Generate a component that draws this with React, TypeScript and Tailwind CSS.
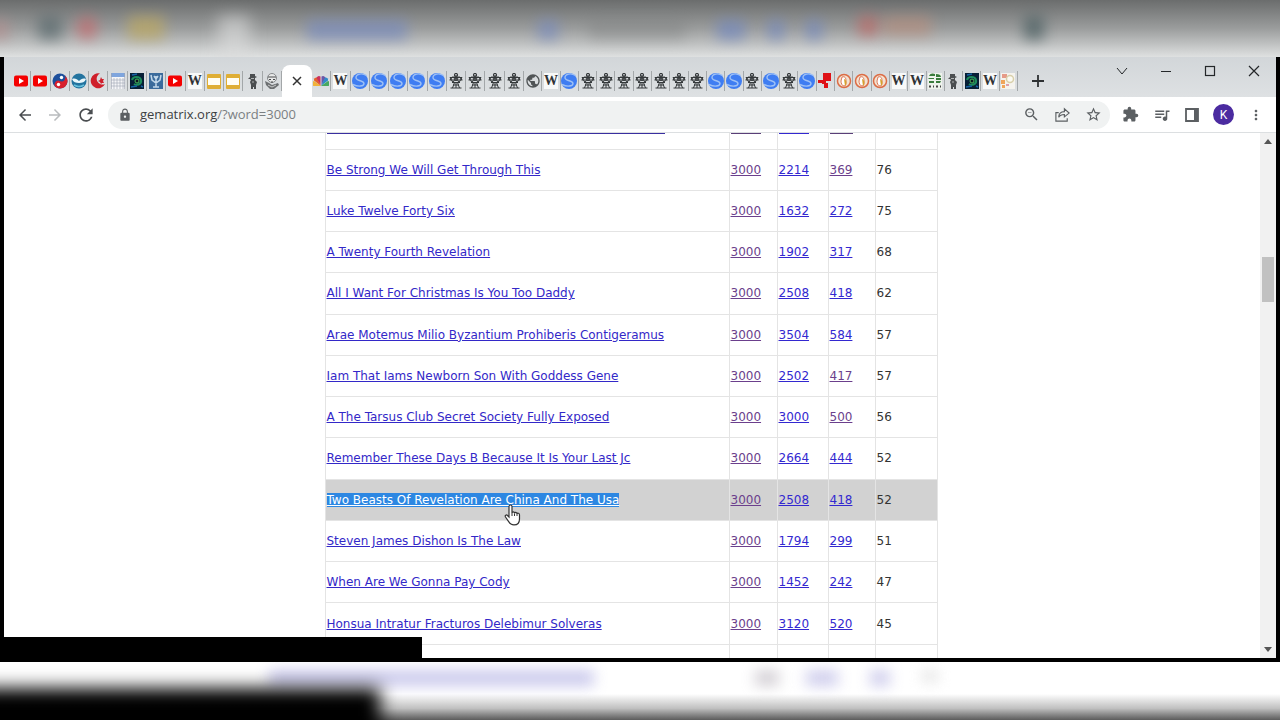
import type { ReactNode } from 'react';
import {
  MdArrowBack,
  MdArrowForward,
  MdRefresh,
  MdLock,
  MdZoomOut,
  MdStarBorder,
  MdExtension,
  MdQueueMusic,
  MdMoreVert,
  MdPublic,
} from 'react-icons/md';

type IconName =
  | 'youtube' | 'yin' | 'bird' | 'moon' | 'calendar' | 'swirl' | 'psi' | 'wiki' | 'slides'
  | 'figure' | 'mask' | 'peacock' | 's' | 'tower' | 'globe' | 'red' | 'duck' | 'leaf' | 'palette';

interface Row {
  phrase: string;
  jewish: string;
  english: string;
  simple: string;
  searches: string;
  visited?: boolean;
  selected?: boolean;
}

const firstTabs: IconName[] = [
  'youtube', 'youtube', 'yin', 'bird', 'moon', 'calendar', 'swirl', 'psi', 'youtube', 'wiki',
  'slides', 'slides', 'figure', 'mask',
];

const middleTabs: IconName[] = [
  'peacock', 'wiki', 's', 's', 's', 's', 's', 'tower', 'tower', 'tower', 'tower',
];

const lastTabs: IconName[] = [
  'globe', 'wiki', 's', 'tower', 'tower', 'tower', 'tower', 'tower', 'tower', 'tower', 's', 's',
  'tower', 's', 'tower', 's', 'red', 'duck', 'duck', 'duck', 'wiki', 'wiki', 'leaf', 'figure',
  'swirl', 'wiki', 'palette',
];

const rows: Row[] = [
  { phrase: 'Be Strong We Will Get Through This', jewish: '3000', english: '2214', simple: '369', searches: '76', visited: true },
  { phrase: 'Luke Twelve Forty Six', jewish: '3000', english: '1632', simple: '272', searches: '75' },
  { phrase: 'A Twenty Fourth Revelation', jewish: '3000', english: '1902', simple: '317', searches: '68' },
  { phrase: 'All I Want For Christmas Is You Too Daddy', jewish: '3000', english: '2508', simple: '418', searches: '62' },
  { phrase: 'Arae Motemus Milio Byzantium Prohiberis Contigeramus', jewish: '3000', english: '3504', simple: '584', searches: '57' },
  { phrase: 'Iam That Iams Newborn Son With Goddess Gene', jewish: '3000', english: '2502', simple: '417', searches: '57', visited: true },
  { phrase: 'A The Tarsus Club Secret Society Fully Exposed', jewish: '3000', english: '3000', simple: '500', searches: '56', visited: true },
  { phrase: 'Remember These Days B Because It Is Your Last Jc', jewish: '3000', english: '2664', simple: '444', searches: '52' },
  { phrase: 'Two Beasts Of Revelation Are China And The Usa', jewish: '3000', english: '2508', simple: '418', searches: '52', selected: true },
  { phrase: 'Steven James Dishon Is The Law', jewish: '3000', english: '1794', simple: '299', searches: '51' },
  { phrase: 'When Are We Gonna Pay Cody', jewish: '3000', english: '1452', simple: '242', searches: '47' },
  { phrase: 'Honsua Intratur Fracturos Delebimur Solveras', jewish: '3000', english: '3120', simple: '520', searches: '45' },
];

const drawings: Partial<Record<IconName, ReactNode>> = {
  youtube: (
    <>
      <rect x="1" y="2.500" width="14" height="11" rx="2" fill="#f40000" />
      <path d="M6 5l5 3-5 3z" fill="#fff" />
    </>
  ),
  yin: (
    <>
      <circle cx="8" cy="8" r="7.500" fill="#1d4f9c" />
      <path d="M8 .5a7.500 7.500 0 0 1 0 15 3.750 3.750 0 0 1 0-7.500 3.750 3.750 0 0 0 0-7.500z" fill="#d8202c" transform="rotate(25 8 8)" />
      <circle cx="9.500" cy="4.500" r="1.700" fill="#fff" />
      <circle cx="6.500" cy="11.500" r="1.700" fill="#fff" />
    </>
  ),
  bird: (
    <>
      <circle cx="8" cy="8" r="7.500" fill="#23739f" />
      <path d="M1 6c3-1 5 0 7 2 2-2 4-3 7-2-1 3-4 4-7 4S2 9 1 6z" fill="#e8f6fb" />
      <path d="M3 12q5 3 10 0" stroke="#67c0dc" strokeWidth="1.5" fill="none" />
    </>
  ),
  moon: (
    <>
      <path d="M10 .5A7.500 7.500 0 1 0 15 11 5.500 5.500 0 1 1 10 .5z" fill="#cf1f2b" />
      <path d="M11 4l1 2 2 0-1 2 1 2-2 0-1 1-1-2-2-1 2-1z" fill="#cf1f2b" />
    </>
  ),
  calendar: (
    <>
      <rect x="1" width="14" height="16" fill="#f5f6f8" />
      <rect x="1" width="14" height="4" fill="#7fa5dd" />
      <path d="M1 7h14M1 10h14M1 13h14M4 5v11M7 5v11M10 5v11M13 5v11M1.500 0v16M14.500 0v16" stroke="#9fa5b1" strokeWidth=".6" />
    </>
  ),
  swirl: (
    <>
      <rect x="1" width="14" height="16" fill="#071f36" />
      <path d="M3 7c1-4 8-4 9 0s-4 6-7 4" stroke="#1c8b5b" strokeWidth="2" fill="none" />
      <circle cx="8" cy="8" r="2" fill="#0a1420" stroke="#4dbb5b" />
      <path d="M2 14l6-1M3 2l5-1M12 13l2 1" stroke="#1764a6" strokeWidth="1.5" />
    </>
  ),
  psi: (
    <>
      <rect x="1" width="14" height="16" fill="#3b6b9c" />
      <path d="M3 2l1 5 4 3 4-3 1-5M8 3v11M5 14h6M6 3l2 3 2-3" stroke="#c2d8ea" strokeWidth="1.5" fill="none" />
    </>
  ),
  slides: (
    <>
      <rect x="1" y="1" width="14" height="15" rx="1" fill="#dfae35" />
      <rect x="2" y="5" width="12" height="7" fill="#fffdf3" />
    </>
  ),
  figure: (
    <>
      <path d="M5 1h5v2l2 1-2 1v2l2 2-1 3v4H9v-2H8v2H6v-4L5 9l1-2-1-1H3l2-2z" fill="#4c4f51" />
      <path d="M6 5.500h3M7 9h2" stroke="#b2b5b5" />
    </>
  ),
  mask: (
    <>
      <path d="M1 8l4 2 3 2 6-2 1 2-5 4H6l-4-4z" fill="#6c6f71" />
      <circle cx="8" cy="5" r="4.500" fill="#e8e9e9" stroke="#86898b" />
      <path d="M4 4h8M5 6.500h2M9 6.500h2M7 9h2" stroke="#47494b" strokeWidth="1.2" />
      <path d="M4 12l4 2 4-2" stroke="#c9caca" fill="none" />
    </>
  ),
  peacock: (
    <>
      <path d="M8 13L2 13a2.500 2.500 0 0 1-1-5z" fill="#f1b23a" />
      <path d="M8 13L1 7.500a2.500 2.500 0 0 1 3-3z" fill="#e5622d" />
      <path d="M7.500 12L3.500 5a2.500 2.500 0 0 1 4-1.500z" fill="#cb315f" />
      <path d="M8.500 12V3.500a2.500 2.500 0 0 1 4 1.500z" fill="#6b56a7" />
      <path d="M8 13l4-8.500a2.500 2.500 0 0 1 3 3z" fill="#3189c9" />
      <path d="M8 13l7-5a2.500 2.500 0 0 1-1 5z" fill="#48a860" />
    </>
  ),
  s: (
    <>
      <circle cx="8" cy="8" r="8" fill="#3f7df2" />
      <path d="M14.500 2.500C10-.5 4 1 4 4.500c0 4 8 2.500 8 6 0 3-6 3.500-11 1" stroke="#9fc1f5" strokeWidth="1.4" fill="none" />
    </>
  ),
  tower: (
    <>
      <path d="M6 3h4M2 4.500h12M1.500 7h13M4 9.500h8M5 12h6M2.500 15h11M2 4.500L5 9.500 8 4.500l3 5 3-5M2 7l3-3.500L8 8l3-4.500L14 7M6.500 9.500l-2 5.500M9.500 9.500l2 5.500M8 9.500V15" stroke="#34383a" strokeWidth="1" fill="none" />
      <circle cx="8" cy="2" r="1.500" fill="none" stroke="#34383a" strokeWidth="1.2" />
    </>
  ),
  red: <path d="M6 0h8v8H9v2h2v5H7v-4H5v-1H1V7h5z" fill="#df1116" />,
  duck: (
    <>
      <circle cx="8" cy="8" r="6.500" fill="#f3e3d2" stroke="#dc6c45" strokeWidth="1.5" />
      <path d="M6 4c3-1 4 1 4 4s0 5-2 5-3-3-3-5z" fill="#fff" stroke="#d65a36" strokeWidth=".8" />
      <path d="M8 6c3 1 3 5 1 7z" fill="#d6a12c" />
    </>
  ),
  leaf: (
    <>
      <rect x="1" width="14" height="16" fill="#eef3ec" />
      <path d="M2 3c1-3 4-3 6-2v2zM9 1c3 0 5 1 5 3l-5 0zM1 5h6v1H2zM9 5h5v2H9zM2 8h5v2H2zM9 8h5l-1 2H9z" fill="#397c3c" />
      <path d="M2 13.500h2M6 13.500h1M9 13.500h2M13 13.500h1" stroke="#444" strokeWidth="2" />
    </>
  ),
  palette: (
    <>
      <rect x="1" width="14" height="16" fill="#f5f3ee" />
      <path d="M2 1h5v4H2z" fill="#e69b88" />
      <circle cx="10" cy="6" r="3.500" fill="#fbfaf2" stroke="#d8cfaa" strokeWidth="1.500" />
      <path d="M1 7h4v4H1zM2 12h3v3H2z" fill="#f0a55b" />
      <path d="M6 11h3v2H6z" fill="#dca0ac" />
    </>
  ),
};

const Favicon = ({ name }: { name: IconName }) => {
  if (name === 'wiki') {
    return (
      <span className="flex h-4 w-3.5 items-center justify-center bg-[#f8f9f9] font-['Liberation_Serif',serif] text-sm leading-4 font-bold text-[#303336]">
        W
      </span>
    );
  }
  if (name === 'globe') {
    return <MdPublic className="size-4 text-[#505456]" />;
  }
  return (
    <svg viewBox="0 0 16 16" className="size-4" aria-hidden="true">
      {drawings[name]}
    </svg>
  );
};

const TabGroup = ({ tabs, className }: { tabs: IconName[]; className: string }) => (
  <div className={className}>
    {tabs.map((name, i) => (
      <button key={i} aria-label={`${name} tab`} className="flex h-5 min-w-0 flex-1 items-center justify-center border-r border-[#a3a7a9]">
        <Favicon name={name} />
      </button>
    ))}
  </div>
);

const TabStrip = () => (
  <div className="flex h-10 items-end bg-linear-to-b from-[#d2d6d9] to-[#dee1e3] pl-2">
    <TabGroup tabs={firstTabs} className="flex h-8 w-[270px] items-center" />
    <div className="flex h-8 w-[30px] items-center justify-center rounded-t-lg bg-white">
      <button aria-label="Close tab">
        <svg viewBox="0 0 10 10" className="size-2.5" stroke="#333" strokeWidth="1.5">
          <path d="M1 1l8 8M9 1l-8 8" />
        </svg>
      </button>
    </div>
    <TabGroup tabs={middleTabs} className="flex h-8 w-[212px] items-center" />
    <TabGroup tabs={lastTabs} className="flex h-8 w-[494px] items-center" />
    <button aria-label="New tab" className="ml-3.5 flex h-8 items-center">
      <svg viewBox="0 0 12 12" className="size-3" stroke="#2e3133" strokeWidth="1.8">
        <path d="M6 0v12M0 6h12" />
      </svg>
    </button>
    <div className="mr-4 ml-auto flex items-center gap-8 self-start pt-2 text-[#242729]">
      <button aria-label="Search tabs">
        <svg viewBox="0 0 12 12" className="size-3" fill="none" stroke="currentColor">
          <path d="M1 3l5 6 5-6" />
        </svg>
      </button>
      <button aria-label="Minimize">
        <svg viewBox="0 0 12 12" className="size-3" stroke="currentColor">
          <path d="M1 6.500h10" />
        </svg>
      </button>
      <button aria-label="Maximize">
        <svg viewBox="0 0 12 12" className="size-3" fill="none" stroke="currentColor" strokeWidth="1.2">
          <rect x="1.500" y="1.500" width="9" height="9" />
        </svg>
      </button>
      <button aria-label="Close">
        <svg viewBox="0 0 12 12" className="size-3" stroke="currentColor" strokeWidth="1.2">
          <path d="M1 1l10 10M11 1L1 11" />
        </svg>
      </button>
    </div>
  </div>
);

const Toolbar = () => (
  <div className="flex h-9 items-center border-b border-[#dcdfe1] bg-white pr-3 pl-3 text-[#5b5f62]">
    <div className="flex gap-3">
      <button aria-label="Back"><MdArrowBack className="size-[18px] text-[#4a4d50]" /></button>
      <button aria-label="Forward"><MdArrowForward className="size-[18px] text-[#b9bcbe]" /></button>
      <button aria-label="Reload"><MdRefresh className="size-[20px] text-[#4a4d50]" /></button>
    </div>
    <div className="ml-3 flex h-7 flex-1 items-center rounded-full bg-[#f0f2f2] pr-2 pl-2.5">
      <MdLock className="size-3.5 shrink-0" />
      <label className="relative ml-2 flex h-5 flex-1 items-center font-['Open_Sans',sans-serif] text-[13px]">
        <span className="pointer-events-none">
          <span className="text-[#3c4043]">gematrix.org</span>
          <span className="text-[#7b7f82]">/?word=3000</span>
        </span>
        <input aria-label="Address" className="absolute inset-0 w-full bg-transparent outline-none" />
      </label>
      <div className="flex items-center gap-3.5">
        <button aria-label="Zoom out"><MdZoomOut className="size-[17px]" /></button>
        <button aria-label="Share">
          <svg viewBox="0 0 18 18" className="size-[17px]" fill="none" stroke="currentColor" strokeWidth="1.2">
            <path d="M5 7H2v9h12v-3M5 12c0-4 2-6 6-6V3l5 4.500-5 4V9C8 9 6 10 5 12z" />
          </svg>
        </button>
        <button aria-label="Bookmark"><MdStarBorder className="size-[17px]" /></button>
      </div>
    </div>
    <div className="ml-3 flex items-center gap-3.5">
      <button aria-label="Extensions"><MdExtension className="size-[17px]" /></button>
      <button aria-label="Media"><MdQueueMusic className="size-[18px]" /></button>
      <button aria-label="Side panel">
        <svg viewBox="0 0 14 14" className="size-3.5">
          <path d="M1 1h12v12H1z" fill="none" stroke="currentColor" strokeWidth="1.8" />
          <path d="M9 1h4v12H9z" fill="currentColor" />
        </svg>
      </button>
      <button aria-label="Profile" className="flex size-[21px] items-center justify-center rounded-full bg-[#4b2ba0] font-['Roboto',sans-serif] text-xs text-white">
        K
      </button>
      <button aria-label="Menu"><MdMoreVert className="size-4" /></button>
    </div>
  </div>
);

const cell = 'border border-[#e4e4e4] pl-px whitespace-nowrap';

const ResultsTable = () => (
  <table className="h-[553px] w-[613px] shrink-0 table-fixed border-collapse text-[#333]">
    <colgroup>
      <col />
      <col className="w-12" />
      <col className="w-[51px]" />
      <col className="w-[47px]" />
      <col className="w-[62px]" />
    </colgroup>
    {/* bottom edge of the row scrolled under the toolbar */}
    <thead>
      <tr className="h-4 align-top">
        <td className="border-x border-[#e4e4e4] pl-px"><div className="h-px w-[338px] bg-[#3a2fa0]" /></td>
        <td className="border-x border-[#e4e4e4] pl-px"><div className="h-px w-[30px] bg-[#5a3f78]" /></td>
        <td className="border-x border-[#e4e4e4] pl-px"><div className="h-px w-[30px] bg-[#3328d0]" /></td>
        <td className="border-x border-[#e4e4e4] pl-px"><div className="h-px w-[23px] bg-[#5a3f78]" /></td>
        <td className="border-x border-[#e4e4e4]" />
      </tr>
    </thead>
    <tbody>
      {rows.map((row) => (
        <tr key={row.phrase} className={row.selected ? 'bg-[#d2d2d2]' : ''}>
          <td className={cell}>
            <a href="#" className={row.selected ? 'bg-[#2d87e2] text-white underline' : 'text-[#3328c8] underline'}>
              {row.phrase}
            </a>
          </td>
          <td className={cell}><a href="#" className="text-[#6b3f8c] underline">{row.jewish}</a></td>
          <td className={cell}><a href="#" className="text-[#3328d0] underline">{row.english}</a></td>
          <td className={cell}>
            <a href="#" className={row.visited ? 'text-[#6b3f8c] underline' : 'text-[#3328d0] underline'}>{row.simple}</a>
          </td>
          <td className={cell}>{row.searches}</td>
        </tr>
      ))}
      <tr>
        <td className={cell}>&nbsp;</td>
        <td className={cell} />
        <td className={cell} />
        <td className={cell} />
        <td className={cell} />
      </tr>
    </tbody>
  </table>
);

const HandCursor = () => (
  <svg viewBox="0 0 18 22" className="absolute top-[371px] left-1/2 -ml-[136px] h-[22px] w-[18px]" aria-hidden="true">
    <path
      d="M5 2.500c0-2 3-2 3 0V9c0-1.500 2.500-1.500 2.500.3.300-1.300 2.500-1.200 2.500.6.400-1.100 2.500-.9 2.500 1v4c0 4-2 6-5.500 6-3 0-4-1-5.500-3.500L1.500 13c-1-1.700 1-2.700 2-1.500L5 13z"
      fill="#fff"
      stroke="#333"
      strokeWidth="1.2"
    />
    <path d="M8 9v3M10.500 9.500V12M13 10v2" stroke="#333" />
  </svg>
);

const Scrollbar = () => (
  <div className="flex w-4 shrink-0 flex-col items-center justify-between bg-[#f1f1f1] py-1.5" aria-hidden="true">
    <svg viewBox="0 0 8 5" className="h-[5px] w-2"><path d="M0 5l4-5 4 5z" fill="#555" /></svg>
    <div className="mb-58 h-[45px] w-3 bg-[#c1c1c1]" />
    <svg viewBox="0 0 8 5" className="h-[5px] w-2"><path d="M0 0l4 5 4-5z" fill="#555" /></svg>
  </div>
);

const TopHaze = () => (
  <div className="relative h-[57px] shrink-0 overflow-hidden bg-linear-to-b from-[#6b6d6d] via-[#9b9d9d] to-[#dfe1e1]">
    <div className="absolute top-5 -left-2 h-5 w-4 bg-[#b98a8a] opacity-60 blur-[7px]" />
    <div className="absolute top-4 left-[3%] h-6 w-6 bg-[#4d6065] opacity-60 blur-[7px]" />
    <div className="absolute top-4 left-[6%] h-6 w-5 rounded-full bg-[#cf6064] opacity-60 blur-[7px]" />
    <div className="absolute top-4 left-[10%] h-6 w-9 bg-[#c2aa56] opacity-60 blur-[7px]" />
    <div className="absolute top-4 left-[17%] h-12 w-8 bg-[#dcdddd] opacity-60 blur-[8px]" />
    <div className="absolute top-5 left-[24%] h-5 w-[100px] bg-[#7086c2] opacity-60 blur-[7px]" />
    <div className="absolute top-5 left-[42%] h-5 w-5 bg-[#7086c2] opacity-60 blur-[7px]" />
    <div className="absolute top-5 left-[46%] h-5 w-24 bg-[#757777] opacity-30 blur-[7px]" />
    <div className="absolute top-5 left-[56%] h-5 w-7 bg-[#6a83c4] opacity-60 blur-[7px]" />
    <div className="absolute top-5 left-[60%] h-5 w-4 bg-[#6a83c4] opacity-60 blur-[7px]" />
    <div className="absolute top-5 left-[63%] h-5 w-4 bg-[#6a83c4] opacity-60 blur-[7px]" />
    <div className="absolute top-4 left-[67%] h-5 w-5 bg-[#c65f5b] opacity-60 blur-[7px]" />
    <div className="absolute top-4 left-[69%] h-5 w-12 bg-[#c08a74] opacity-50 blur-[7px]" />
    <div className="absolute top-4 left-[80%] h-6 w-5 bg-[#465b5e] opacity-70 blur-[7px]" />
  </div>
);

const BottomHaze = () => (
  <div className="relative h-[58px] shrink-0 overflow-hidden bg-linear-to-b from-white from-55% via-[#c0c0c0] via-80% to-[#5c5c5c]">
    <div className="absolute top-2 left-[21%] h-4 w-[325px] bg-[#bebde8] opacity-80 blur-[7px]" />
    <div className="absolute top-2 left-[59%] h-4 w-6 bg-[#c2bdc5] opacity-70 blur-[7px]" />
    <div className="absolute top-2 left-[63%] h-4 w-8 bg-[#c4c2e8] opacity-80 blur-[7px]" />
    <div className="absolute top-2 left-[68%] h-4 w-5 bg-[#c4c2e8] opacity-80 blur-[7px]" />
    <div className="absolute top-2 left-[72%] h-3 w-4 bg-[#dedede] opacity-80 blur-[7px]" />
    <div className="absolute top-[26px] -left-8 h-20 w-[412px] bg-black blur-[9px]" />
  </div>
);

const App = () => {
  return (
    <div className="flex h-screen flex-col overflow-hidden bg-black font-['DejaVu_Sans',sans-serif] text-xs">
      <TopHaze />
      <div className="relative flex min-h-0 flex-1 flex-col border-x-4 border-b-4 border-black bg-white">
        <TabStrip />
        <Toolbar />
        <main className="relative flex min-h-0 flex-1 overflow-hidden">
          <div className="flex min-w-0 flex-1 items-start justify-center overflow-hidden pr-0.5">
            <ResultsTable />
          </div>
          <Scrollbar />
          <HandCursor />
        </main>
        <div className="absolute bottom-0 left-0 h-[21px] w-[418px] bg-black" />
      </div>
      <BottomHaze />
    </div>
  );
};

export default App;
